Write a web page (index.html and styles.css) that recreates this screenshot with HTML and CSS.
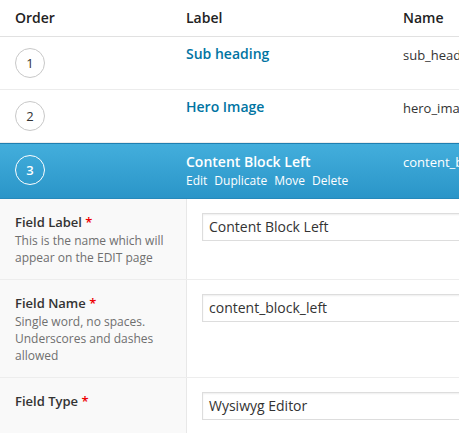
FILE: index.html
```html
<!DOCTYPE html>
<html>
<head>
<meta charset="utf-8">
<link rel="stylesheet" href="styles.css">
</head>
<body>
<div class="fields">
  <div class="thead">
    <div class="c-order">Order</div>
    <div class="c-label">Label</div>
    <div class="c-name">Name</div>
  </div>
  <div class="row">
    <div class="c-order"><span class="num">1</span></div>
    <div class="c-label"><a class="title">Sub heading</a></div>
    <div class="c-name">sub_heading</div>
  </div>
  <div class="row">
    <div class="c-order"><span class="num">2</span></div>
    <div class="c-label"><a class="title">Hero Image</a></div>
    <div class="c-name">hero_image</div>
  </div>
  <div class="row active">
    <div class="c-order"><span class="num">3</span></div>
    <div class="c-label">
      <a class="title">Content Block Left</a>
      <div class="actions"><span>Edit</span><span>Duplicate</span><span>Move</span><span>Delete</span></div>
    </div>
    <div class="c-name">content_block_left</div>
  </div>
  <div class="settings">
    <div class="setting">
      <div class="s-label">
        <div class="s-title">Field Label <span class="req">*</span></div>
        <div class="s-desc">This is the name which will appear on the EDIT page</div>
      </div>
      <div class="s-input"><div class="input">Content Block Left</div></div>
    </div>
    <div class="setting">
      <div class="s-label">
        <div class="s-title">Field Name <span class="req">*</span></div>
        <div class="s-desc">Single word, no spaces. Underscores and dashes allowed</div>
      </div>
      <div class="s-input"><div class="input">content_block_left</div></div>
    </div>
    <div class="setting">
      <div class="s-label">
        <div class="s-title">Field Type <span class="req">*</span></div>
      </div>
      <div class="s-input"><div class="input">Wysiwyg Editor</div></div>
    </div>
  </div>
</div>
</body>
</html>
```

FILE: styles.css
```css
html, body {
  margin: 0;
  padding: 0;
  background: #fff;
  overflow: hidden;
}
body {
  font-family: "Open Sans", "Noto Sans", sans-serif;
  color: #333;
  font-size: 13px;
}
.fields {
  width: 640px;
}
.thead {
  display: flex;
  height: 37px;
  border-bottom: 1px solid #e1e1e1;
  font-weight: 600;
  font-size: 14px;
  color: #222;
  line-height: 20px;
  box-sizing: border-box;
}
.thead > div {
  padding-top: 8px;
}
.c-order {
  width: 186px;
  padding-left: 15px;
  box-sizing: border-box;
  flex: none;
}
.c-label {
  width: 217px;
  flex: none;
}
.c-name {
  flex: 1;
}
.row {
  display: flex;
  height: 53px;
  border-bottom: 1px solid #ececec;
  box-sizing: border-box;
}
.row .c-order {
  padding-top: 11px;
}
.row .c-label {
  padding-top: 7px;
}
.row .c-name {
  padding-top: 8px;
  line-height: 20px;
}
.num {
  display: flex;
  align-items: center;
  justify-content: center;
  width: 28px;
  height: 28px;
  border: 1px solid #c8c8c8;
  border-radius: 50%;
  font-size: 13px;
  color: #333;
}
.title {
  display: block;
  font-weight: 600;
  font-size: 14px;
  line-height: 20px;
  color: #0074a2;
}
.row.active {
  height: 56px;
  background: linear-gradient(to bottom, #43aedc, #2a95c8);
  border-top: 1px solid #1f7fb1;
  border-bottom: 1px solid #2589bb;
  color: #fff;
}
.row.active .c-order {
  padding-top: 11px;
}
.row.active .c-label {
  padding-top: 8px;
}
.row.active .title {
  color: #fff;
}
.row.active .num {
  border-color: #fff;
  color: #fff;
  font-weight: 600;
}
.row.active .c-name {
  padding-top: 8px;
}
.actions {
  display: flex;
  gap: 7px;
  font-size: 12px;
  line-height: 18px;
  color: #fff;
}
.settings {
  border-bottom: 1px solid #ececec;
}
.setting {
  display: flex;
  border-top: 1px solid #ededed;
}
.setting:first-child {
  border-top: 0;
}
.s-label {
  width: 187px;
  flex: none;
  box-sizing: border-box;
  background: #f9f9f9;
  border-right: 1px solid #e8e8e8;
  padding: 13px 15px 13px 15px;
}
.s-title {
  font-weight: 600;
  font-size: 13px;
  line-height: 20px;
  color: #333;
}
.req {
  color: #e00;
}
.s-desc {
  font-size: 12px;
  line-height: 17px;
  color: #6f6f6f;
}
.s-input {
  flex: 1;
  padding: 14px 0 14px 15px;
}
.input {
  height: 28px;
  box-sizing: border-box;
  border: 1px solid #ddd;
  box-shadow: inset 0 1px 2px rgba(0,0,0,0.07);
  padding: 0 6px;
  font-size: 14px;
  line-height: 26px;
  color: #333;
  background: #fff;
}
```
